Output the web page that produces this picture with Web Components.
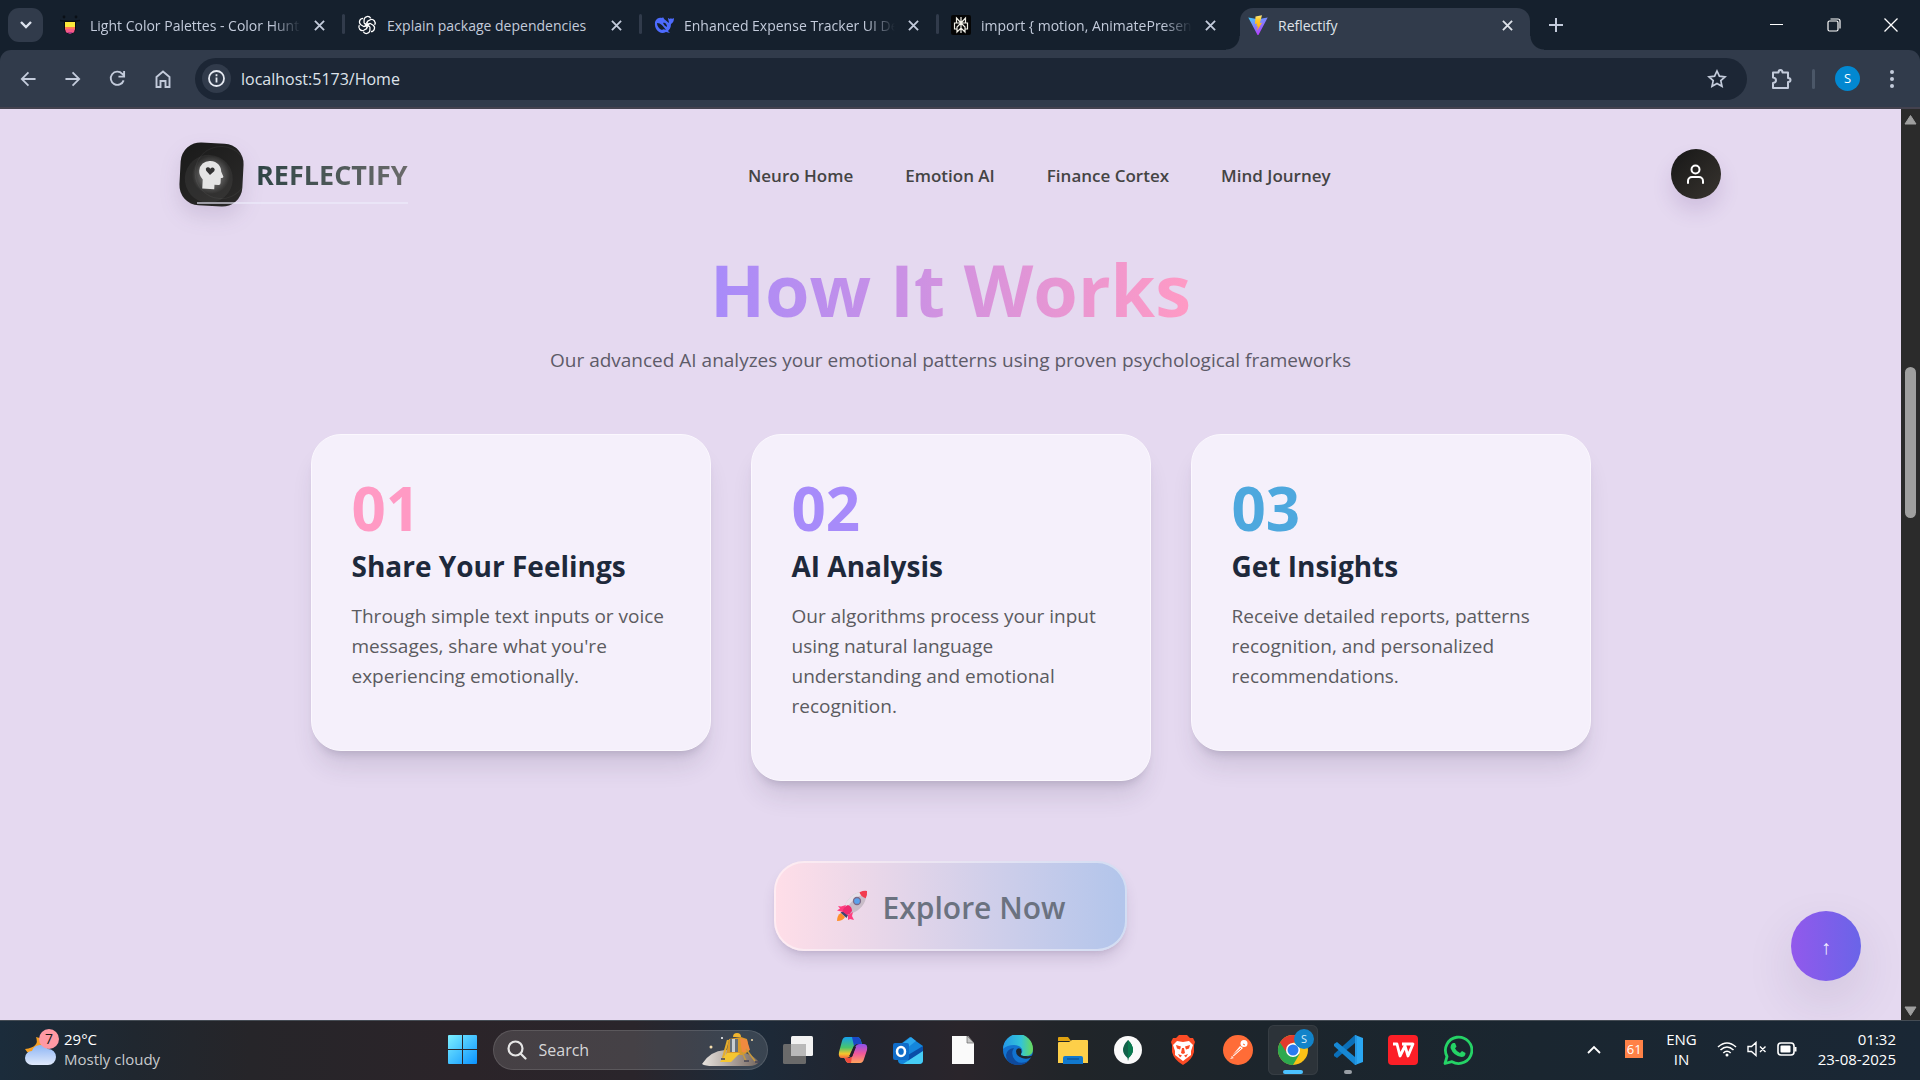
<!DOCTYPE html>
<html lang="en">
<head>
<meta charset="utf-8">
<title>Reflectify</title>
<style>
body{margin:0;font-family:"Open Sans","Noto Sans",sans-serif;background:#e5d9f0}
</style>
</head>
<body>
<browser-window></browser-window>
<script>
const RESET = `*{box-sizing:border-box}button{font:inherit;color:inherit;background:none;border:0;padding:0;margin:0;cursor:pointer}
a{color:inherit;text-decoration:none}svg{display:block;flex:none}h1,h2,p{margin:0}input{font:inherit;color:inherit;background:none;border:0;outline:0;padding:0;min-width:0}`;

function define(name, css, html) {
  const t = document.createElement('template');
  t.innerHTML = `<style>${RESET}${css}</style>${html}`;
  customElements.define(name, class extends HTMLElement {
    constructor() {
      super();
      this.attachShadow({ mode: 'open' }).appendChild(t.content.cloneNode(true));
    }
  });
}

/* ---------- browser chrome ---------- */
define('browser-tab', `
:host{display:flex;box-sizing:border-box;flex:0 1 297px;min-width:0;height:42px;position:relative;align-items:center;padding:0 18px 0 12px;gap:10px;color:#c3cbdb;font-size:14px}
:host([active]){color:#dfe3ea}
.bg{display:none}
:host([active]) .bg{display:block;position:absolute;inset:0 3px 0 4px;background:#313b4b;border-radius:13px 13px 0 0}
.bg:before,.bg:after{content:"";position:absolute;bottom:0;width:14px;height:14px}
.bg:before{right:100%;background:radial-gradient(circle at 0 0,transparent 13px,#313b4b 14px)}
.bg:after{left:100%;background:radial-gradient(circle at 100% 0,transparent 13px,#313b4b 14px)}
.sep{display:none;position:absolute;right:0;top:6px;width:3px;height:20px;border-radius:2px;background:#313b4b}
:host([divided]) .sep{display:block}
.open{flex:1;min-width:0;display:flex;align-items:center;gap:10px;position:relative;height:100%;padding-bottom:8px;text-align:left}
.label{white-space:nowrap;overflow:hidden;flex:1}
:host([long]) .label{-webkit-mask-image:linear-gradient(90deg,#000 86%,transparent);mask-image:linear-gradient(90deg,#000 86%,transparent)}
.close{position:relative;width:16px;height:16px;display:grid;place-items:center;margin-bottom:8px}`,
`<span class="bg"></span><button class="open" role="tab"><slot name="icon"></slot><span class="label"><slot></slot></span></button>
<button class="close" aria-label="Close tab"><svg width="11" height="11" viewBox="0 0 12 12" stroke="currentColor" stroke-width="2"><path d="M1 1l10 10M11 1L1 11"/></svg></button><span class="sep"></span>`);

define('tab-strip', `
:host{display:flex;height:50px;box-sizing:border-box;background:#15202d;padding:8px 0 0 8px;color:#c3cbdb}
.menu{width:35px;height:34px;border-radius:11px;background:#313b4b;display:grid;place-items:center;color:#dde3ee;margin-right:5px;flex:none}
.tabs{display:flex;flex:0 1 1485px;min-width:0}
.new{width:36px;height:34px;margin-left:5px;display:grid;place-items:center;flex:none}
.win{display:flex;margin-left:auto;color:#fff;padding-right:1px}
.win button{width:57px;height:34px;display:grid;place-items:center}
svg.f{width:20px;height:20px}`,
`<button class="menu" aria-label="Search tabs"><svg width="12" height="8" viewBox="0 0 12 8" fill="none" stroke="currentColor" stroke-width="2.4"><path d="M1 1l5 5 5-5"/></svg></button>
<div class="tabs" role="tablist">
<browser-tab divided long><svg slot="icon" class="f" viewBox="0 0 20 20"><circle cx="4" cy="2" r="1.4" fill="#0a0f16"/><circle cx="16" cy="2" r="1.4" fill="#0a0f16"/><path d="M0 5.500q10 2 20 0" stroke="#0a0f16" stroke-width="1.500" fill="none"/><path d="M4 6h12v7a6 6 0 0 1-12 0z" fill="#0c0c10"/><path d="M5 7h10v6H5z" fill="#fde93a"/><path d="M5 12h10v2.500H5z" fill="#ff7a57"/><path d="M5 14h10q-.5 3-2 4H7q-1.500-1-2-4z" fill="#f85a87"/><path d="M7 17h6q-1.500 2-3 2t-3-2z" fill="#b43c8c"/></svg>Light Color Palettes - Color Hunt</browser-tab>
<browser-tab divided><svg slot="icon" class="f" viewBox="0 0 24 24"><g fill="none" stroke="#fff" stroke-width="1.500"><path d="M8.500 10V5.500A4.300 4.300 0 0 1 16.500 4M8.500 10l6.500 3.800"/><path d="M8.500 10V5.500A4.300 4.300 0 0 1 16.500 4M8.500 10l6.500 3.800" transform="rotate(60 12 12)"/><path d="M8.500 10V5.500A4.300 4.300 0 0 1 16.500 4M8.500 10l6.500 3.800" transform="rotate(120 12 12)"/><path d="M8.500 10V5.500A4.300 4.300 0 0 1 16.500 4M8.500 10l6.500 3.800" transform="rotate(180 12 12)"/><path d="M8.500 10V5.500A4.300 4.300 0 0 1 16.500 4M8.500 10l6.500 3.800" transform="rotate(240 12 12)"/><path d="M8.500 10V5.500A4.300 4.300 0 0 1 16.500 4M8.500 10l6.500 3.800" transform="rotate(300 12 12)"/></g></svg>Explain package dependencies</browser-tab>
<browser-tab divided long><svg slot="icon" class="f" viewBox="0 0 20 20"><path d="M1 7C2 3 6 2 8 3c1-1 2 0 2 1 2 1 3 3 5 4 0-2-1-3-1-5 1 0 1 1 2 1l1-1c0 1 2 1 3 0 0 3-1 5-3 6 0 4-2 6-3 7l2 2-4-1C6 20 0 15 1 7z" fill="#4d6bfe"/><path d="M3 8c4 0 6 3 9 7-2-1-3-1-4 0-3-1-5-4-5-7z" fill="#15202d"/><path d="M9 8c2-1 4 1 4 4-2-1-3-2-4-4z" fill="#15202d"/></svg>Enhanced Expense Tracker UI Design</browser-tab>
<browser-tab long><svg slot="icon" class="f" viewBox="0 0 20 20"><rect width="20" height="20" rx="2" fill="#050505"/><path d="M10 2v16M5.500 3l4.500 5 4.500-5v5h-9zM3.500 8h13v6H14v3l-4-4-4 4v-3H3.500zM10 8l-4 4v2M10 8l4 4v2" fill="none" stroke="#f0efe6" stroke-width="1.200"/></svg>import { motion, AnimatePresence }</browser-tab>
<browser-tab active><svg slot="icon" class="f" viewBox="0 0 20 20"><defs><linearGradient id="v" x1="0" y1="0" x2=".6" y2="1"><stop stop-color="#41d1ff"/><stop offset="1" stop-color="#bd34fe"/></linearGradient><linearGradient id="y" x1="0" y1="0" x2="0" y2="1"><stop stop-color="#ffea83"/><stop offset=".3" stop-color="#ffca28"/><stop offset="1" stop-color="#ffa800"/></linearGradient></defs><path d="M.3 2.500L10 4.200l9.700-1.700L10.600 19.700q-.6.700-1.200 0z" fill="url(#v)"/><path d="M14 .3L7.500 1.500 7 9l2-.4-.6 3 1.500-.4-.9 4.500 5-8-2.200.4z" fill="url(#y)"/></svg>Reflectify</browser-tab>
</div>
<button class="new" aria-label="New tab"><svg width="14" height="14" viewBox="0 0 14 14" stroke="currentColor" stroke-width="2"><path d="M7 0v14M0 7h14"/></svg></button>
<div class="win"><button aria-label="Minimise"><svg width="13" height="13" viewBox="0 0 13 13" stroke="currentColor"><path d="M0 5.500h13"/></svg></button>
<button aria-label="Restore"><svg width="14" height="14" viewBox="0 0 14 14" fill="none" stroke="currentColor" stroke-width="1.200"><rect x="1" y="3" width="10" height="10" rx="1.500"/><path d="M3.500 1H11q2 0 2 2v7.500"/></svg></button>
<button aria-label="Close"><svg width="14" height="14" viewBox="0 0 14 14" stroke="currentColor" stroke-width="1.300"><path d="M.5.5l13 13M13.500.5l-13 13"/></svg></button></div>`);

define('tool-bar', `
:host{display:block;background:#15202d}
.bar{display:flex;align-items:center;height:59px;padding:0 6px 0 5px;background:#313b4b;border-bottom:2px solid #44424f;border-radius:11px 11px 0 0;color:#c3cbdb}
.nav{width:45px;height:40px;display:grid;place-items:center;flex:none}
.box{flex:1;display:flex;align-items:center;height:42px;border-radius:21px;background:#1c2635;margin:0 13px 0 10px;padding:0 20px 0 7px;min-width:0}
.info{width:29px;height:29px;border-radius:50%;background:#313b4b;display:grid;place-items:center;margin-right:10px;color:#e6eaf2}
input{flex:1;font-size:16px;color:#dfe3ea}
.ext{width:42px;height:40px;display:grid;place-items:center}
.line{width:3px;height:20px;border-radius:2px;background:#4b5768;margin:0 20px 0 10px}
.me{width:25px;height:25px;border-radius:50%;background:#0288d1;color:#fff;font-size:13px;line-height:25px}
.dots{width:44px;height:40px;display:grid;place-items:center;margin-left:10px}`,
`<div class="bar">
<button class="nav" aria-label="Back"><svg width="16" height="16" viewBox="0 0 18 18" fill="none" stroke="currentColor" stroke-width="2"><path d="M17.500 9H2M9.500 1.500L2 9l7.500 7.500"/></svg></button>
<button class="nav" aria-label="Forward"><svg width="16" height="16" viewBox="0 0 18 18" fill="none" stroke="currentColor" stroke-width="2"><path d="M.5 9H16M8.500 1.500L16 9l-7.500 7.500"/></svg></button>
<button class="nav" aria-label="Reload"><svg width="17" height="17" viewBox="0 0 18 18" fill="none" stroke="currentColor" stroke-width="2"><path d="M15.500 11A7 7 0 1 1 14 4l2 2M16 1v6h-6"/></svg></button>
<button class="nav" aria-label="Home"><svg width="18" height="18" viewBox="0 0 18 18" fill="none" stroke="currentColor" stroke-width="1.900"><path d="M2.500 7L9 1.500 15.500 7v10h-4v-6h-5v6h-4z"/></svg></button>
<div class="box"><button class="info" aria-label="Site information"><svg width="17" height="17" viewBox="0 0 17 17" fill="none" stroke="currentColor" stroke-width="1.800"><circle cx="8.500" cy="8.500" r="7.500"/><path d="M8.500 7.500v5M8.500 4.300v1.900"/></svg></button>
<input aria-label="Address" value="localhost:5173/Home">
<button aria-label="Bookmark"><svg width="20" height="20" viewBox="0 0 20 20" fill="none" stroke="currentColor" stroke-width="1.700"><path d="M10 2l2.400 5.200 5.600.6-4.200 3.800 1.200 5.700L10 14.400l-5 2.900 1.200-5.700L2 7.800l5.600-.6z"/></svg></button></div>
<button class="ext" aria-label="Extensions"><svg width="22" height="22" viewBox="0 0 22 22"><path d="M3 4.500h5.500q0-2.500 2-2.500t2 2.500H18V10q2.500 0 2.500 2T18 14v6H3v-5q3-.5 3-2.800T3 9.500z" fill="none" stroke="currentColor" stroke-width="2" stroke-linejoin="round"/></svg></button>
<span class="line"></span><button class="me" aria-label="Profile">S</button>
<button class="dots" aria-label="Menu"><svg width="4" height="18" viewBox="0 0 4 18" fill="currentColor"><circle cx="2" cy="2" r="2"/><circle cx="2" cy="9" r="2"/><circle cx="2" cy="16" r="2"/></svg></button></div>`);

/* ---------- page ---------- */
define('site-header', `
:host{display:flex;box-sizing:border-box;align-items:center;justify-content:space-between;width:100%;max-width:1601px;margin:0 auto;padding:0 30px;height:130px}
.brand{display:flex;align-items:center;gap:13px;position:relative}
.mark{width:63px;height:63px;border-radius:20px;background:linear-gradient(135deg,#191919,#2c2b2a);transform:rotate(3deg);display:grid;place-items:center;overflow:hidden}
.wrap{filter:drop-shadow(0 10px 10px rgba(60,40,90,.13))}
.name{font-size:27px;line-height:40px;padding-top:2px;font-weight:700;background:linear-gradient(90deg,#2f4545,#6b6b6b);-webkit-background-clip:text;background-clip:text;color:transparent}
.rule{position:absolute;left:17px;right:0;bottom:2px;height:2px;background:rgba(236,236,252,.6)}
nav{display:flex;gap:52px;font-size:17px;font-weight:600;color:#444;line-height:30px;padding-top:3px}
.user{width:50px;height:50px;border-radius:50%;background:linear-gradient(135deg,#171717,#38342f);display:grid;place-items:center;box-shadow:0 12px 20px rgba(90,50,130,.15);color:#fff}`,
`<a class="brand" href="#home"><span class="wrap"><span class="mark"><svg width="63" height="63" viewBox="0 0 63 63"><defs><radialGradient id="g"><stop stop-color="#fff" stop-opacity=".5"/><stop offset="1" stop-color="#fff" stop-opacity="0"/></radialGradient></defs><circle cx="29" cy="36" r="24" fill="#fff" opacity=".06"/><circle cx="41" cy="29" r="26" fill="none" stroke="#fff" opacity=".05"/><circle cx="31" cy="32" r="19" fill="url(#g)"/><path d="M23 46v-9q-4-4-4-8.500A10.500 10.500 0 0 1 29.500 18C37 18 41 23 41 28l2.500 5q.3 1.500-2.500 1.500v5q0 2-2 2h-4V46z" fill="#e4e4e4"/><path d="M30 32l-4-4q-1.200-2 .4-3.200 2-1 3.600 1 1.600-2 3.600-1 1.600 1.200.4 3.200z" fill="#333"/></svg></span></span>
<span class="name">REFLECTIFY</span><span class="rule"></span></a>
<nav><a href="#neuro">Neuro Home</a><a href="#emotion">Emotion AI</a><a href="#finance">Finance Cortex</a><a href="#mind">Mind Journey</a></nav>
<button class="user" aria-label="Account"><svg width="24" height="24" viewBox="0 0 24 24" fill="none" stroke="currentColor" stroke-width="2" stroke-linecap="round"><circle cx="11.500" cy="7.500" r="4"/><path d="M4 21v-2a4 4 0 0 1 4-4h7a4 4 0 0 1 4 4v2"/></svg></button>`);

define('step-card', `
:host{display:block;box-sizing:border-box;flex:1 1 0;background:#f5f0fb;border:1px solid #fbf8fe;border-radius:30px;padding:40px;box-shadow:0 20px 25px -5px rgba(50,45,75,.12),0 8px 10px -6px rgba(50,45,75,.2)}
.n{font-size:60px;line-height:66px;font-weight:700;color:var(--tone)}
h2{font-size:28px;line-height:50px;font-weight:700;color:#1e293b;margin-bottom:10px}
p{font-size:19px;line-height:30px;color:#5b5b60;padding-bottom:19px}`,
`<div class="n"><slot name="number"></slot></div><h2><slot name="title"></slot></h2><p><slot></slot></p>`);

define('explore-button', `
:host{display:block}
button{display:flex;align-items:center;gap:15px;height:90px;width:353px;justify-content:center;border:2px solid rgba(255,255,255,.42);border-radius:30px;background:linear-gradient(90deg,#ffdee8,#b2c5eb) border-box;box-shadow:0 10px 15px -3px rgba(60,45,90,.16),0 4px 6px -4px rgba(60,45,90,.16);font-size:30px;font-weight:600;color:#6b7280}
span{padding-top:2px}`,
`<button><svg width="32" height="32" viewBox="0 0 32 32"><path d="M1 31q0-6 4-8l4 4q-2 4-8 4z" fill="#ff8f2b"/><path d="M4.500 22.500l3-1.500 4.500 4-1.500 3z" fill="#3d4470"/><path d="M7 21C9 12 15 4 24 2l6 6C28 17 21 22 12 25z" fill="#c9bcc8"/><path d="M7 21C9 12 15 4 24 2l2.500 2.500C18 8 12 14 9.500 23z" fill="#e8dfe8"/><path d="M23.500 2.300q4.500-2 7.500-1.300.5 3.500-1.300 7.300-5-1.500-6.200-6z" fill="#f23b4e"/><circle cx="21" cy="11" r="3.500" fill="#5aa2ee" stroke="#7d6b88" stroke-width="1.300"/><path d="M2 16l3 .5 5-1.500-3 7-6-1.500 3-2zM17 22l-1 4 2 4-4-1-2 1v-5z" fill="#ff3d7f"/><path d="M6.500 21.500q1-5 5.500-6.500 4 1.500 4 6-1.500 3-5 4z" fill="#ee2a6f"/></svg><span><slot></slot></span></button>`);

define('how-section', `
:host{display:flex;flex-direction:column;align-items:center;text-align:center}
h1{font-size:72px;line-height:100px;font-weight:700;background:linear-gradient(90deg,#a78bfa,#ff9ac4);-webkit-background-clip:text;background-clip:text;color:transparent}
.sub{font-size:19px;line-height:30px;color:#5d5b68;margin-bottom:59px;margin-top:6px}
.cards{display:flex;gap:40px;align-items:flex-start;width:100%;max-width:1280px;text-align:left;margin-bottom:80px}`,
`<h1>How It Works</h1><p class="sub">Our advanced AI analyzes your emotional patterns using proven psychological frameworks</p>
<div class="cards">
<step-card style="--tone:#ff9ac4"><span slot="number">01</span><span slot="title">Share Your Feelings</span>Through simple text inputs or voice messages, share what you're experiencing emotionally.</step-card>
<step-card style="--tone:#a78bfa"><span slot="number">02</span><span slot="title">AI Analysis</span>Our algorithms process your input using natural language understanding and emotional recognition.</step-card>
<step-card style="--tone:#4ea8de"><span slot="number">03</span><span slot="title">Get Insights</span>Receive detailed reports, patterns recognition, and personalized recommendations.</step-card>
</div><explore-button>Explore Now</explore-button>`);

define('scroll-rail', `
:host{display:flex;box-sizing:border-box;flex-direction:column;align-items:center;width:19px;background:#2b2b2b;padding:5px 0 3px;color:#9f9f9f}
.track{flex:1;display:flex;flex-direction:column}
.track:before{content:"";flex:242}
.thumb{flex:151;width:11px;border-radius:6px;background:#9f9f9f}
.track:after{content:"";flex:489}`,
`<svg width="13" height="11" viewBox="0 0 13 11"><path d="M6.500 1.500L12 10H1z" fill="currentColor" stroke="currentColor" stroke-linejoin="round"/></svg><div class="track"><div class="thumb"></div></div><svg width="13" height="11" viewBox="0 0 13 11"><path d="M6.500 9.500L12 1H1z" fill="currentColor" stroke="currentColor" stroke-linejoin="round"/></svg>`);

define('page-view', `
:host{display:flex;flex:1;min-height:0;overflow:hidden;background:#e5d9f0}
main{flex:1;position:relative;min-width:0}
.top{position:absolute;right:40px;bottom:39px;width:70px;height:70px;border-radius:50%;background:linear-gradient(90deg,#9259ec,#6a64e8);color:#f1edff;font-size:20px;box-shadow:0 20px 50px rgba(60,45,90,.12)}`,
`<main><site-header></site-header><how-section></how-section><button class="top" aria-label="Back to top">↑</button></main><scroll-rail></scroll-rail>`);

/* ---------- taskbar ---------- */
define('task-icon', `
:host{display:block}
button{width:50px;height:50px;display:grid;place-items:center;position:relative;border-radius:6px}
:host([active]) button{background:#2c3339;box-shadow:inset 0 0 0 1px #363d43}
.dot{display:none;position:absolute;bottom:1px;left:50%;transform:translateX(-50%);height:4px;border-radius:2px;width:8px;background:#999fa5}
:host([active]) .dot{display:block;width:20px;background:#4cc2ff}
:host([running]) .dot{display:block}`,
`<button><slot></slot><span class="dot"></span></button>`);

define('task-bar', `
:host{display:grid;box-sizing:border-box;grid-template-columns:1fr auto 1fr;align-items:center;height:60px;border-top:1px solid #454c54;padding-bottom:1px;color:#fff;font-size:15px;line-height:20px;
background:linear-gradient(90deg,#1b2c3b 0,#20272f 7%,#262529 13%,#2b2429 24%,#2a252b 33%,#1c2a39 39%,#22252f 45%,#2a252b 50%,#202529 56%,#1c252c 66%,#1a2630 80%,#1a2735 100%)}
.weather{display:flex;align-items:center;gap:9px;margin-left:25px;text-align:left;justify-self:start;padding-bottom:2px}
.weather small{display:block;font-size:15px;color:#c8cacd}
.apps{display:flex;align-items:center;gap:5px}
.search{display:flex;align-items:center;gap:12px;width:275px;height:40px;border-radius:20px;background:rgba(255,255,255,.13);box-shadow:inset 0 0 0 1px rgba(255,255,255,.12);padding:0 7px 0 14px;color:#d6d6d8}
.search input{flex:1;width:60px;font-size:16px}
.search input::placeholder{color:#d6d6d8;opacity:1}
.tray{display:flex;align-items:center;justify-self:end;padding:0 24px 2px 0}
.lang{text-align:center;margin:0 20px 0 23px}
.badge{background:#ff8247;width:18px;height:18px;margin-left:24px;font-size:13px;line-height:18px;text-align:center;color:#fff}
.clock{text-align:right;margin-left:20px}
.s{display:flex;gap:10px;align-items:center}
.icon{width:30px;height:30px}`,
`<button class="weather"><svg width="30" height="40" viewBox="0 0 30 40" overflow="visible"><defs><linearGradient id="c" x1="0" y1="0" x2="0" y2="1"><stop stop-color="#8db5f5"/><stop offset="1" stop-color="#e0e9fb"/></linearGradient></defs><path d="M11 8q4 10-11 12 3 6 12 6 8-1 8-10-1-7-9-8z" fill="#f6a023"/><path d="M7 36a7 7 0 1 1 0-14 9 9 0 0 1 16-2 8 8 0 1 1 0 16z" fill="url(#c)"/><circle cx="24" cy="10" r="10" fill="#ff99a4"/><text x="24" y="15" font-size="14" text-anchor="middle" fill="#1b1b1b">7</text></svg><span>29°C<small>Mostly cloudy</small></span></button>
<div class="apps">
<task-icon><svg width="30" height="30" viewBox="0 0 30 30"><defs><linearGradient id="w" x1="0" y1="0" x2="1" y2="1"><stop stop-color="#7df0ff"/><stop offset="1" stop-color="#0a92ff"/></linearGradient></defs><path d="M1 0h13v14H0V1q0-1 1-1zM15 0H28q1 0 1 1v13H15zM0 15h14V29H1q-1 0-1-1zM15 15H29V28q0 1-1 1H15z" fill="url(#w)"/></svg></task-icon>
<label class="search"><svg width="20" height="20" viewBox="0 0 20 20" fill="none" stroke="#e6e6e6" stroke-width="2.200"><circle cx="8.500" cy="8.500" r="7"/><path d="M13.500 13.500l5 5" stroke-linecap="round"/></svg><input placeholder="Search" aria-label="Search">
<svg width="60" height="34" viewBox="0 0 60 34"><defs><linearGradient id="m"><stop stop-color="#e8e3de"/><stop offset="1" stop-color="#75675f"/></linearGradient></defs><path d="M1 31Q9 18 24 17q24 0 34 12-3 4-10 4H12q-8 0-11-2z" fill="url(#m)"/><path d="M28 6l12-2 6 2 2 12-6 4H25z" fill="#d99a29"/><path d="M39 5l7 2 3 10-8 3z" fill="#f08a40"/><path d="M29 6h8v13h-8z" fill="#677078"/><path d="M31 6h3v13h-3z" fill="#c9ced2"/><path d="M32 4a4 4 0 0 1 8 0z" fill="#f0b42e"/><path d="M27 7l-5 18" stroke="#e5ae2d" stroke-width="2.200"/><path d="M45 16l9 12M41 19l4 9" stroke="#c79a3d" stroke-width="1.500"/><path d="M26 20h13l-9 9H19z" fill="#f5c630"/><path d="M20 26h4M43 28h5M54 29h5" stroke="#445" stroke-width="1.500"/><circle cx="10" cy="14" r="1.500" fill="#f7dfae"/><circle cx="21" cy="5" r="1" fill="#fff"/><circle cx="51" cy="7" r="1" fill="#f7dfae"/></svg></label>
<task-icon><svg class="icon" viewBox="0 0 30 30"><rect x="0" y="9" width="23" height="20" rx="1.500" fill="#6a6a6a"/><rect x="8" y="1" width="22" height="20" rx="1.500" fill="#f2f2f2"/><path d="M8 9h15v12H8z" fill="#b9b9b9"/></svg></task-icon>
<task-icon><svg class="icon" viewBox="0 0 30 30"><defs><linearGradient id="k1" x1="0" y1="0" x2="0" y2="1"><stop stop-color="#15a0ee"/><stop offset=".5" stop-color="#49c56b"/><stop offset=".8" stop-color="#f6c62c"/><stop offset="1" stop-color="#f5683d"/></linearGradient><linearGradient id="k2" x1="0" y1="0" x2="0" y2="1"><stop stop-color="#8b51ee"/><stop offset=".5" stop-color="#f0589a"/><stop offset="1" stop-color="#ffa45c"/></linearGradient></defs><path d="M8 2h11q3 0 4 4l1 3h-5q-3 0-4 4l-2 6q-1 4-5 4H4q-4 0-3-6L4 6q1-4 4-4z" fill="url(#k1)"/><path d="M22 28H11q-3 0-4-4l-1-1h5q3 0 4-4l2-6q1-4 5-4h4q4 0 3 6l-3 9q-1 4-4 4z" fill="url(#k2)"/><path d="M14 2h5q3 0 4 4l1 3h-5q-2 0-3 2z" fill="#1a49c8"/><path d="M7 23h4q2 0 3-2l-1 7h-2q-3 0-4-5z" fill="#ee4a3c"/><path d="M15.500 12l2.500 0-4 10-3-1q1-1 1.500-3z" fill="#241f2c"/></svg></task-icon>
<task-icon><svg class="icon" viewBox="0 0 30 30"><path d="M5 11L17 2l13 9v14q0 4-4 4H9q-4 0-4-4z" fill="#1486dc"/><path d="M5 12l13-10 5 4L9 17z" fill="#2ba6ee"/><path d="M15 20l15-9v6l-15 9z" fill="#0a4fa8"/><path d="M10 29l20-13v9q0 4-4 4z" fill="#46cdf5"/><rect y="8" width="16" height="17" rx="2" fill="#0f6cc9"/><ellipse cx="8" cy="16.500" rx="4" ry="4.600" fill="none" stroke="#fff" stroke-width="2.500"/></svg></task-icon>
<task-icon><svg class="icon" viewBox="0 0 30 30"><path d="M4 1h16l6 7v21H4z" fill="#fafafa"/><path d="M19 1l7 7h-7z" fill="#c6c6c6" stroke="#666" stroke-width=".7"/></svg></task-icon>
<task-icon><svg class="icon" viewBox="0 0 30 30"><defs><linearGradient id="e1"><stop stop-color="#2498e8"/><stop offset=".6" stop-color="#33c4d8"/><stop offset="1" stop-color="#6bdb56"/></linearGradient></defs><circle cx="15" cy="15" r="15" fill="#1273d0"/><path d="M0 14A15 15 0 0 1 30 14q0 7-7 7-5 0-5-2 2-2 1-5-2-4-8-4-7 0-11 4z" fill="url(#e1)"/><path d="M11 13q-4 6 1 12 5 5 14 1-6 5-13 4Q3 28 3 20q1-6 8-7z" fill="#0f4a9c"/><path d="M18 14q-4-2-5 2 0 5 6 7 5 2 10-1l1-2q-3 2-7 1-6 0-5-2 1-2 0-5z" fill="#20252b"/></svg></task-icon>
<task-icon><svg class="icon" viewBox="0 0 30 30"><path d="M0 3q0-1 1-1h9l3 4H0z" fill="#e0a210"/><path d="M0 8q0-1 1-1h10l3-2h15q1 0 1 1v22H0z" fill="#fdcf49"/><path d="M5 29v-6q0-2 2-2h16q2 0 2 2v6z" fill="#1179ce"/><path d="M9 24h12" stroke="#0d579c" stroke-width="1.500"/></svg></task-icon>
<task-icon><svg class="icon" viewBox="0 0 30 30"><circle cx="15" cy="15" r="14" fill="#fafafa"/><path d="M15 5q5 5 5 10 0 4-4.500 8l-.5 3-.5-3Q10 19 10 15q0-5 5-10z" fill="#116149"/><path d="M15 5v21l.5-3Q20 19 20 15q0-5-5-10z" fill="#0a7a4f"/></svg></task-icon>
<task-icon><svg class="icon" viewBox="0 0 30 30"><path d="M8 3l3-3h8l3 3 3 0 2 4-1 3 0 7q-2 8-11 13Q6 25 4 17V10L3 7l2-4z" fill="#fb4b25"/><path d="M9 6l6 1 6-1 4 4-2 6 0 4-4 3-4 3-4-3-4-3 0-4-2-6z" fill="#fff"/><path d="M8 10l5 1.500-1 3-3-1zM22 10l-5 1.500 1 3 3-1zM14 13h2l1 5-2 1-2-1zM10 19l4 1.500-2 2zM20 19l-4 1.500 2 2z" fill="#fb4b25"/></svg></task-icon>
<task-icon><svg class="icon" viewBox="0 0 30 30"><circle cx="15" cy="15" r="15" fill="#ff6c37"/><path d="M8 22l9-11 3 2-9 8zM7 24l2-2 2 1z" fill="#fff"/><circle cx="21" cy="8.500" r="3.500" fill="#fff"/><path d="M9 21l9-8M20 9l2 1" stroke="#ff6c37" stroke-width="1"/></svg></task-icon>
<task-icon active><svg class="icon" viewBox="0 0 30 30" overflow="visible"><circle cx="15" cy="15" r="15" fill="#fbc116"/><path d="M15 15L2 7.500A15 15 0 0 0 15 30l6.500-11z" fill="#2da94f"/><path d="M2 7.500A15 15 0 0 1 28 7.500H15L9 18z" fill="#e33b2e"/><circle cx="15" cy="15" r="7" fill="#fff"/><circle cx="15" cy="15" r="5.500" fill="#2a7bf0"/><circle cx="26" cy="4" r="10" fill="#1283c9"/><text x="26" y="8" font-size="11" text-anchor="middle" fill="#d6ecf8">S</text></svg></task-icon>
<task-icon running><svg class="icon" viewBox="0 0 30 30"><path d="M22 0l8 3v24l-8 3z" fill="#2aa7f3"/><path d="M22 0v8L4 23l-3-2v-2z" fill="#0b6fb8"/><path d="M22 30v-8L4 7 1 9v2z" fill="#1788d4"/><path d="M22 0l2 1v28l-2 1z" fill="#2497e3"/></svg></task-icon>
<task-icon><svg class="icon" viewBox="0 0 30 30"><rect width="30" height="30" rx="4" fill="#fc1f27"/><path d="M5 9h4l3 12 5-10 3 10L25 9H14" fill="none" stroke="#fff" stroke-width="2.800" stroke-linejoin="round"/></svg></task-icon>
<task-icon><svg class="icon" viewBox="0 0 30 30"><path d="M2 28.500l2-7A13.200 13.200 0 1 1 9 26.700z" fill="none" stroke="#25d366" stroke-width="2.800" stroke-linejoin="round"/><path d="M10 8l2 0 1.500 3.500-1.500 2q1.500 3 5 4.500l2-2 3.500 2q0 4-4 4-8-1-11-9 0-4 2.500-5z" fill="#25d366"/></svg></task-icon>
</div>
<div class="tray"><button aria-label="Hidden icons"><svg width="14" height="9" viewBox="0 0 14 9" fill="none" stroke="#fff" stroke-width="1.800"><path d="M1 8l6-6 6 6"/></svg></button><span class="badge">61</span><button class="lang">ENG<br>IN</button>
<button class="s" aria-label="System status"><svg width="20" height="16" viewBox="0 0 20 16" fill="none" stroke="#fff" stroke-width="1.600"><path d="M1 6q9-8 18 0M3.500 9q6.500-6 13 0M6.300 12q3.700-3.500 7.400 0"/><circle cx="10" cy="14" r="1.500" fill="#fff" stroke="none"/></svg><svg width="20" height="16" viewBox="0 0 20 16" fill="none" stroke="#fff" stroke-width="1.400"><path d="M1 5.500h3.500L9 1.500v13l-4.500-4H1zM13 5.500l5.500 5.500M18.500 5.500L13 11"/></svg><svg width="21" height="16" viewBox="0 0 21 16"><rect x="1" y="2" width="16" height="12" rx="3" fill="none" stroke="#fff" stroke-width="1.600"/><rect x="3.500" y="4.500" width="10" height="7" rx="1" fill="#fff"/><path d="M18.500 6v4.500" stroke="#fff" stroke-width="2"/></svg></button>
<button class="clock">01:32<br>23-08-2025</button></div>`);

define('browser-window', `:host{display:flex;flex-direction:column;height:100vh;overflow:hidden}`,
`<tab-strip></tab-strip><tool-bar></tool-bar><page-view></page-view><task-bar></task-bar>`);
</script>
</body>
</html>
